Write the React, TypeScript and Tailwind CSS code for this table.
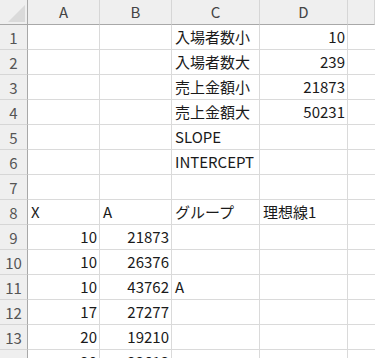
const COLS = ["A", "B", "C", "D", ""];

type Cell = { v: string; num?: boolean };

// sheet contents, row by row, columns A..E
const rows: Cell[][] = [
	[{ v: "" }, { v: "" }, { v: "入場者数小" }, { v: "10", num: true }],
	[{ v: "" }, { v: "" }, { v: "入場者数大" }, { v: "239", num: true }],
	[{ v: "" }, { v: "" }, { v: "売上金額小" }, { v: "21873", num: true }],
	[{ v: "" }, { v: "" }, { v: "売上金額大" }, { v: "50231", num: true }],
	[{ v: "" }, { v: "" }, { v: "SLOPE" }, { v: "" }],
	[{ v: "" }, { v: "" }, { v: "INTERCEPT" }, { v: "" }],
	[{ v: "" }, { v: "" }, { v: "" }, { v: "" }],
	[{ v: "X" }, { v: "A" }, { v: "グループ" }, { v: "理想線1" }],
	[{ v: "10", num: true }, { v: "21873", num: true }, { v: "" }, { v: "" }],
	[{ v: "10", num: true }, { v: "26376", num: true }, { v: "" }, { v: "" }],
	[{ v: "10", num: true }, { v: "43762", num: true }, { v: "A" }, { v: "" }],
	[{ v: "17", num: true }, { v: "27277", num: true }, { v: "" }, { v: "" }],
	[{ v: "20", num: true }, { v: "19210", num: true }, { v: "" }, { v: "" }],
	[{ v: "20", num: true }, { v: "33613", num: true }, { v: "" }, { v: "" }],
];

function CornerCell() {
	return (
		<div className="relative h-[25px] border-r border-b border-[#a8a8a8] bg-[#efefef]">
			<svg width="28" height="25" className="absolute left-0 top-0">
				<polygon points="8,22 25,22 25,5" fill="#dadada" />
			</svg>
		</div>
	);
}

export default function App() {
	return (
		<div
			className="w-[375px] h-[358px] overflow-hidden bg-white text-[15px] text-[#1a1a1a]"
			style={{ fontFamily: '"Noto Sans CJK JP", "Noto Sans", sans-serif' }}
		>
			<div className="grid grid-cols-[28px_72px_72px_88px_88px_1fr]">
				<CornerCell />
				{COLS.map((c, i) => (
					<div
						key={i}
						className="h-[25px] flex items-center justify-center bg-[#efefef] border-b border-b-[#a8a8a8] border-r border-r-[#d6d6d6] text-[#444]"
					>
						{c}
					</div>
				))}

				{rows.map((row, r) => (
					<div key={r} className="contents">
						<div className="h-[25px] flex items-center justify-center bg-[#efefef] border-r border-r-[#a8a8a8] border-b border-b-[#d6d6d6] text-[#555] leading-none">
							{r + 1}
						</div>
						{row.map((cell, c) => (
							<div
								key={c}
								className={`h-[25px] flex items-end pb-[2px] border-r border-b border-[#dadada] whitespace-nowrap leading-[20px] ${
									cell.num ? "justify-end pr-[2px]" : "justify-start pl-[3px]"
								}`}
							>
								{cell.v}
							</div>
						))}
						<div className="h-[25px] border-b border-[#dadada]" />
					</div>
				))}
			</div>
		</div>
	);
}
